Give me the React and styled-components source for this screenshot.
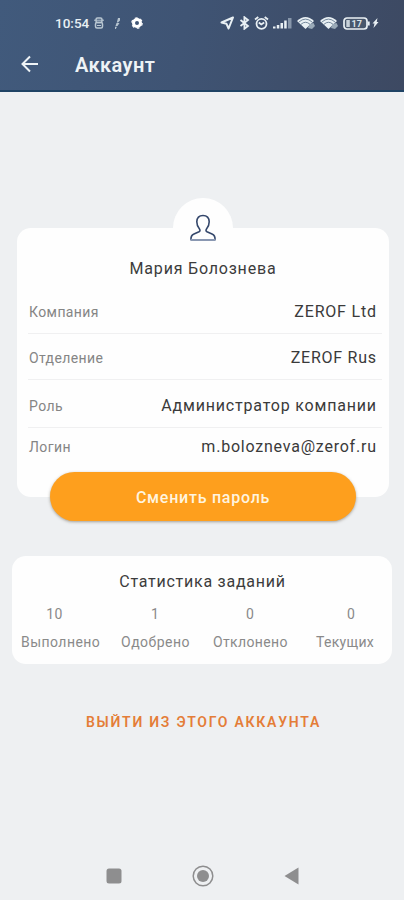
import React from 'react';
import styled, { createGlobalStyle } from 'styled-components';

const GlobalStyle = createGlobalStyle`
  * {
    box-sizing: border-box;
  }
  body {
    margin: 0;
    background: #eef0f2;
    font-family: Roboto, 'Noto Sans', sans-serif;
  }
`;
const Screen = styled.div`
  display: flex;
  flex-direction: column;
  width: 404px;
  height: 900px;
  overflow: hidden;
  background: #eef0f2;
`;
const Header = styled.header`
  height: 92px;
  flex: none;
  background: linear-gradient(100deg, #415a7c 0%, #3f5474 45%, #3d4962 100%);
  border-bottom: 2px solid #1f4365;
`;
const StatusBar = styled.div`
  display: flex;
  align-items: center;
  height: 46px;
  padding: 0 25px 0 55px;
  color: #e9f0f4;

  svg {
    display: block;
    flex: none;
  }
`;
const Clock = styled.span`
  width: 39px;
  font-size: 13.5px;
  font-weight: 500;
  white-space: nowrap;
`;
const Notices = styled.div`
  display: flex;
  align-items: center;
  gap: 11px;
`;
const Signals = styled.div`
  display: flex;
  align-items: center;
  gap: 4px;
  margin-left: auto;
`;
const Battery = styled.svg`
  margin-right: -2px;
`;
const TitleBar = styled.div`
  display: flex;
  align-items: center;
  height: 36px;
  padding-left: 20px;
  gap: 35px;
  color: #eef3f6;
`;
const Title = styled.h1`
  margin: 0;
  padding-top: 1px;
  font-size: 20px;
  font-weight: 600;
  line-height: 24px;
  letter-spacing: 0.4px;
`;
const BackButton = styled.button`
  display: flex;
  padding: 0;
  border: 0;
  background: none;
  color: inherit;
`;
const Card = styled.section`
  display: flex;
  flex-direction: column;
  flex: none;
  background: #fefefe;
  border-radius: 14px;
`;
const ProfileCard = styled(Card)`
  width: 372px;
  height: 269px;
  margin: 136px 0 0 17px;
  padding: 0 7px 0 11px;
`;
const Avatar = styled.div`
  display: flex;
  align-items: center;
  justify-content: center;
  align-self: center;
  flex: none;
  width: 60px;
  height: 60px;
  margin: -30px 0 0 -4px;
  border-radius: 50%;
  background: #fefefe;
`;
const Name = styled.h2`
  margin: 0 0 0 -4px;
  height: 22px;
  flex: none;
  font-size: 16px;
  font-weight: 400;
  line-height: 22px;
  letter-spacing: 0.8px;
  text-align: center;
  color: #3c3c3c;
`;
const Row = styled.div`
  display: flex;
  align-items: flex-end;
  justify-content: space-between;
  flex: none;
  height: ${props => props.$height}px;
  padding: 0 6px ${props => (props.$last ? 0 : 11)}px 1px;
  border-bottom: ${props => (props.$last ? 0 : 1)}px solid #f0f0f1;
  line-height: 20px;
  white-space: nowrap;
`;
const Label = styled.span`
  font-size: 14px;
  letter-spacing: 0.4px;
  color: #858585;
`;
const Value = styled.span`
  font-size: 16px;
  letter-spacing: ${props => props.$spacing}px;
  margin-right: -${props => props.$spacing}px;
  color: #3a3a3a;
`;
const PasswordButton = styled.button`
  align-self: center;
  flex: none;
  width: 306px;
  height: 49px;
  margin: 15px 0 0 -4px;
  padding: 2px 0 0;
  border: 0;
  border-radius: 25px;
  background: #fe9f1d;
  box-shadow: 0 1px 3px rgba(90, 80, 60, 0.5);
  font-family: inherit;
  font-size: 16px;
  font-weight: 500;
  letter-spacing: 0.75px;
  color: #fff4df;
`;
const StatsCard = styled(Card)`
  width: 380px;
  height: 108px;
  margin: 59px 0 0 12px;
  padding: 15px 18px 0 9px;
`;
const StatsTitle = styled.h2`
  margin: 0 -10px 0 0;
  font-size: 16px;
  font-weight: 400;
  line-height: 22px;
  letter-spacing: 0.75px;
  text-align: center;
  color: #3c3c3c;
`;
const Counts = styled.div`
  display: grid;
  grid-template-columns: 67px 134px 56px 146px;
  height: 28px;
  margin-top: 7px;
  line-height: 28px;
  font-size: 14px;
  letter-spacing: 0.3px;
  text-align: center;
  color: #8a8a8a;
`;
const Captions = styled.div`
  display: grid;
  grid-template-columns: 100px 92px 103px auto;
  line-height: 28px;
  font-size: 14px;
  white-space: nowrap;
  color: #8a8a8a;
`;
const Caption = styled.span`
  letter-spacing: ${props => props.$spacing}px;
`;
const LogoutButton = styled.button`
  align-self: center;
  margin: 47px 0 0 3px;
  padding: 0;
  border: 0;
  background: none;
  font-family: inherit;
  font-size: 14px;
  font-weight: 600;
  line-height: 22px;
  letter-spacing: 1.75px;
  white-space: nowrap;
  color: #e47d38;
`;
const NavBar = styled.nav`
  display: flex;
  align-items: center;
  justify-content: space-between;
  height: 48px;
  margin-top: auto;
  padding: 0 105px 0 106px;
  flex: none;
`;

const rows = [
  { label: 'Компания', value: 'ZEROF Ltd', height: 54, spacing: 0.8 },
  { label: 'Отделение', value: 'ZEROF Rus', height: 46, spacing: 0.75 },
  { label: 'Роль', value: 'Администратор компании', height: 48, spacing: 0.8 },
  { label: 'Логин', value: 'm.bolozneva@zerof.ru', height: 29, spacing: 0.78 },
];
const captions = [
  { text: 'Выполнено', spacing: 0.45 },
  { text: 'Одобрено', spacing: 0.5 },
  { text: 'Отклонено', spacing: 0.35 },
  { text: 'Текущих', spacing: 0.3 },
];

const Wifi = () => (
  <svg width="19" height="14" viewBox="0 0 19 14">
    <path d="M0 5Q8.5-3 17 5L8.5 13Z" fill="currentColor" />
    <path d="M1.7 6.2Q8.5 0 15.3 6.2M4 8.3Q8.5 4.2 13 8.3" fill="none" stroke="#667c91" strokeWidth=".9" />
    <path d="M12.5 8l4-1 1.5 3-3 3-4-1z" fill="#9aaab8" />
  </svg>
);

const App = () => {
  return (
    <Screen>
      <GlobalStyle />
      <Header>
        <StatusBar>
          <Clock>10:54</Clock>
          <Notices>
            <svg width="10" height="12" viewBox="0 0 10 12" fill="none" stroke="#b9c7d2" strokeWidth="1.5">
              <rect x="2" y="1" width="6" height="4.5" rx="1.5" />
              <rect x="1.5" y="5.5" width="7" height="5.5" rx="1.5" />
              <path d="M0 3.2h10M3 8.5h4" strokeWidth="1" />
            </svg>
            <svg width="5" height="11" viewBox="0 0 5 11" fill="#b6c4cf">
              <path d="M3 0h2v2.5L3 4.5H1.8ZM1.5 5h3L2.5 8H.5ZM0 8.8h2L.8 11H0Z" />
            </svg>
            <svg width="12" height="12" viewBox="0 0 12 12" fill="none" stroke="#fff">
              <circle cx="6" cy="6" r="3.5" strokeWidth="3" />
              <circle cx="6" cy="6" r="5.2" strokeWidth="1.2" strokeDasharray="2.72 2.72" />
            </svg>
          </Notices>
          <Signals>
            <svg width="15" height="14" viewBox="0 0 15 14" fill="none" stroke="currentColor" strokeWidth="2">
              <path d="M13 1.5L1.5 6.5 6.5 7.8 8.6 12.5Z" strokeLinejoin="round" />
            </svg>
            <svg width="11" height="14" viewBox="0 0 11 14" fill="none" stroke="currentColor" strokeWidth="1.8">
              <path d="M1.5 4L9 10 5.4 12.8V1.2L9 4 1.5 10" />
            </svg>
            <svg width="15" height="14" viewBox="0 0 15 14" fill="none" stroke="currentColor" strokeWidth="1.8">
              <circle cx="7.5" cy="7.8" r="5" />
              <path d="M1 3.5L4.3 1M14 3.5L10.7 1M4.8 6.5l2.5 2 2.9-2" />
            </svg>
            <svg width="20" height="12" viewBox="0 0 20 12" fill="currentColor">
              <path d="M0 9.5h2.5V11.5H0zM3.8 8h2.5v3.5H3.8zM7.5 6H10v5.5H7.5zM11.2 3.5h2.5v8h-2.5z" />
              <path d="M15 1h3.5v10.5H15z" fill="#8796aa" />
            </svg>
            <Wifi />
            <Wifi />
            <Battery width="27" height="13" viewBox="0 0 27 13">
              <rect x="1" y="1" width="23" height="11" rx="3" fill="#48576c" stroke="currentColor" strokeWidth="1.7" />
              <path d="M25.7 4.5v4" stroke="currentColor" strokeWidth="2" />
              <path d="M3.3 3h3.5v7H3.3z" fill="#c7d1d9" />
              <text x="8.5" y="10" fontSize="9" fontWeight="700" fill="#dce4ea">17</text>
            </Battery>
            <svg width="7" height="12" viewBox="0 0 7 12" fill="currentColor">
              <path d="M5.5 1L.5 6.5h2L1.5 11 6.5 5H4.7Z" />
            </svg>
          </Signals>
        </StatusBar>
        <TitleBar>
          <BackButton aria-label="Назад">
            <svg width="20" height="18" viewBox="0 0 20 18" fill="none" stroke="currentColor" strokeWidth="2">
              <path d="M18 9H2.5M10 1.5L2.5 9l7.5 7.5" />
            </svg>
          </BackButton>
          <Title>Аккаунт</Title>
        </TitleBar>
      </Header>
      <ProfileCard>
        <Avatar>
          <svg width="28" height="28" viewBox="0 0 28 28" fill="none" stroke="#34476b" strokeWidth="1.6" strokeLinejoin="round">
            <path d="M2 26.2Q1.5 21.5 5 20L10 17.8Q11.7 16.8 10.5 15Q7.8 12 7.8 7.8Q8 1.5 14 1.5T20.2 7.8Q20.2 12 17.5 15Q16.3 16.8 18 17.8L23 20Q26.5 21.5 26 26.2" />
            <path d="M1.5 26h25" stroke="#8a98b2" strokeWidth="2" />
          </svg>
        </Avatar>
        <Name>Мария Болознева</Name>
        {rows.map((row, i) => (
          <Row key={row.label} $height={row.height} $last={i === rows.length - 1}>
            <Label>{row.label}</Label>
            <Value $spacing={row.spacing}>{row.value}</Value>
          </Row>
        ))}
        <PasswordButton>Сменить пароль</PasswordButton>
      </ProfileCard>
      <StatsCard>
        <StatsTitle>Статистика заданий</StatsTitle>
        <Counts>
          <span>10</span>
          <span>1</span>
          <span>0</span>
          <span>0</span>
        </Counts>
        <Captions>
          {captions.map(({ text, spacing }) => (
            <Caption key={text} $spacing={spacing}>{text}</Caption>
          ))}
        </Captions>
      </StatsCard>
      <LogoutButton>ВЫЙТИ ИЗ ЭТОГО АККАУНТА</LogoutButton>
      <NavBar>
        <svg width="16" height="16" viewBox="0 0 16 16">
          <rect x=".5" y=".5" width="15" height="15" rx="2.5" fill="#8e8e8f" />
        </svg>
        <svg width="22" height="22" viewBox="0 0 22 22">
          <circle cx="11" cy="11" r="9.8" fill="none" stroke="#8e8e8f" strokeWidth="1.5" />
          <circle cx="11" cy="11" r="6" fill="#8e8e8f" />
        </svg>
        <svg width="15" height="18" viewBox="0 0 15 18">
          <path d="M.5 9L14.5.5v17z" fill="#8e8e8f" />
        </svg>
      </NavBar>
    </Screen>
  );
};

export default App;
